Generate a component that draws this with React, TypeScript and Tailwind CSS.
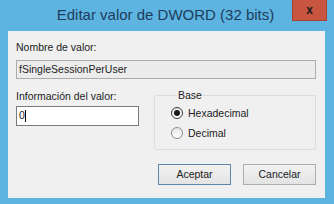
import React from "react";

const font = { fontFamily: '"Liberation Sans", Arial, sans-serif' };

function Radio({ checked, label }: { checked: boolean; label: string }) {
  return (
    <div className="flex items-center h-[16px]">
      <span
        className={`w-[12px] h-[12px] rounded-full border flex items-center justify-center bg-gradient-to-b from-[#e6e6e6] to-[#ffffff] ${
          checked ? "border-[#3a3a3a]" : "border-[#8c8c8c]"
        }`}
      >
        {checked && <span className="w-[6px] h-[6px] rounded-full bg-[#1a1a1a]" />}
      </span>
      <span className="ml-[5px] text-[10.5px] leading-[13px] text-[#222]">{label}</span>
    </div>
  );
}

export default function App() {
  return (
    <div className="w-[334px] h-[204px] bg-[#5db4e0] flex flex-col" style={font}>
      {/* Title bar */}
      <div className="relative h-[31px] shrink-0 flex items-center justify-center">
        <span className="text-[15px] leading-[18px] text-[#1d3d5c] pb-[1px] -ml-[3px]">
          Editar valor de DWORD (32 bits)
        </span>
        <button className="absolute top-0 right-[7px] w-[35px] h-[21px] bg-[#c8553f] border border-[#a8432f] border-t-0 flex items-center justify-center">
          <span className="text-[12px] font-bold leading-none text-[#1b1b1b]">x</span>
        </button>
      </div>

      {/* Client area */}
      <div className="ml-[8px] mr-[9px] mb-[6px] flex-1 bg-[#f0f0f0] pl-[8px] pr-[9px] pt-[10px] text-[#222]">
        <div className="text-[10.5px] leading-[13px] h-[13px]">Nombre de valor:</div>
        <div className="mt-[6px] h-[19px] border border-[#acacac] bg-[#ececec] flex items-center pl-[2px] text-[10.5px]">
          fSingleSessionPerUser
        </div>

        <div className="flex mt-[10px]">
          <div className="w-[123px]">
            <div className="mt-[1px] text-[10.5px] leading-[13px] h-[13px]">Información del valor:</div>
            <div className="mt-[3px] h-[20px] border border-[#7a7a7a] bg-white flex items-center pl-[2px] text-[10.5px]">
              0<span className="w-[1px] h-[12px] bg-black" />
            </div>
          </div>

          <fieldset className="ml-[15px] flex-1 border border-[#dcdcdc] rounded-[2px] pl-[16px] pb-[8px]">
            <legend className="ml-[6px] px-[1px] text-[10.5px] leading-[13px]">Base</legend>
            <div className="mt-[3px] flex flex-col gap-[4px]">
              <Radio checked label="Hexadecimal" />
              <Radio checked={false} label="Decimal" />
            </div>
          </fieldset>
        </div>

        <div className="mt-[14px] flex justify-end gap-[12px]">
          <button className="w-[73px] h-[21px] border border-[#5f86ad] bg-gradient-to-b from-[#f2f2f2] to-[#e3e3e3] text-[10.5px] text-[#222]">
            Aceptar
          </button>
          <button className="w-[73px] h-[21px] border border-[#adadad] bg-gradient-to-b from-[#f2f2f2] to-[#e3e3e3] text-[10.5px] text-[#222]">
            Cancelar
          </button>
        </div>
      </div>
    </div>
  );
}
